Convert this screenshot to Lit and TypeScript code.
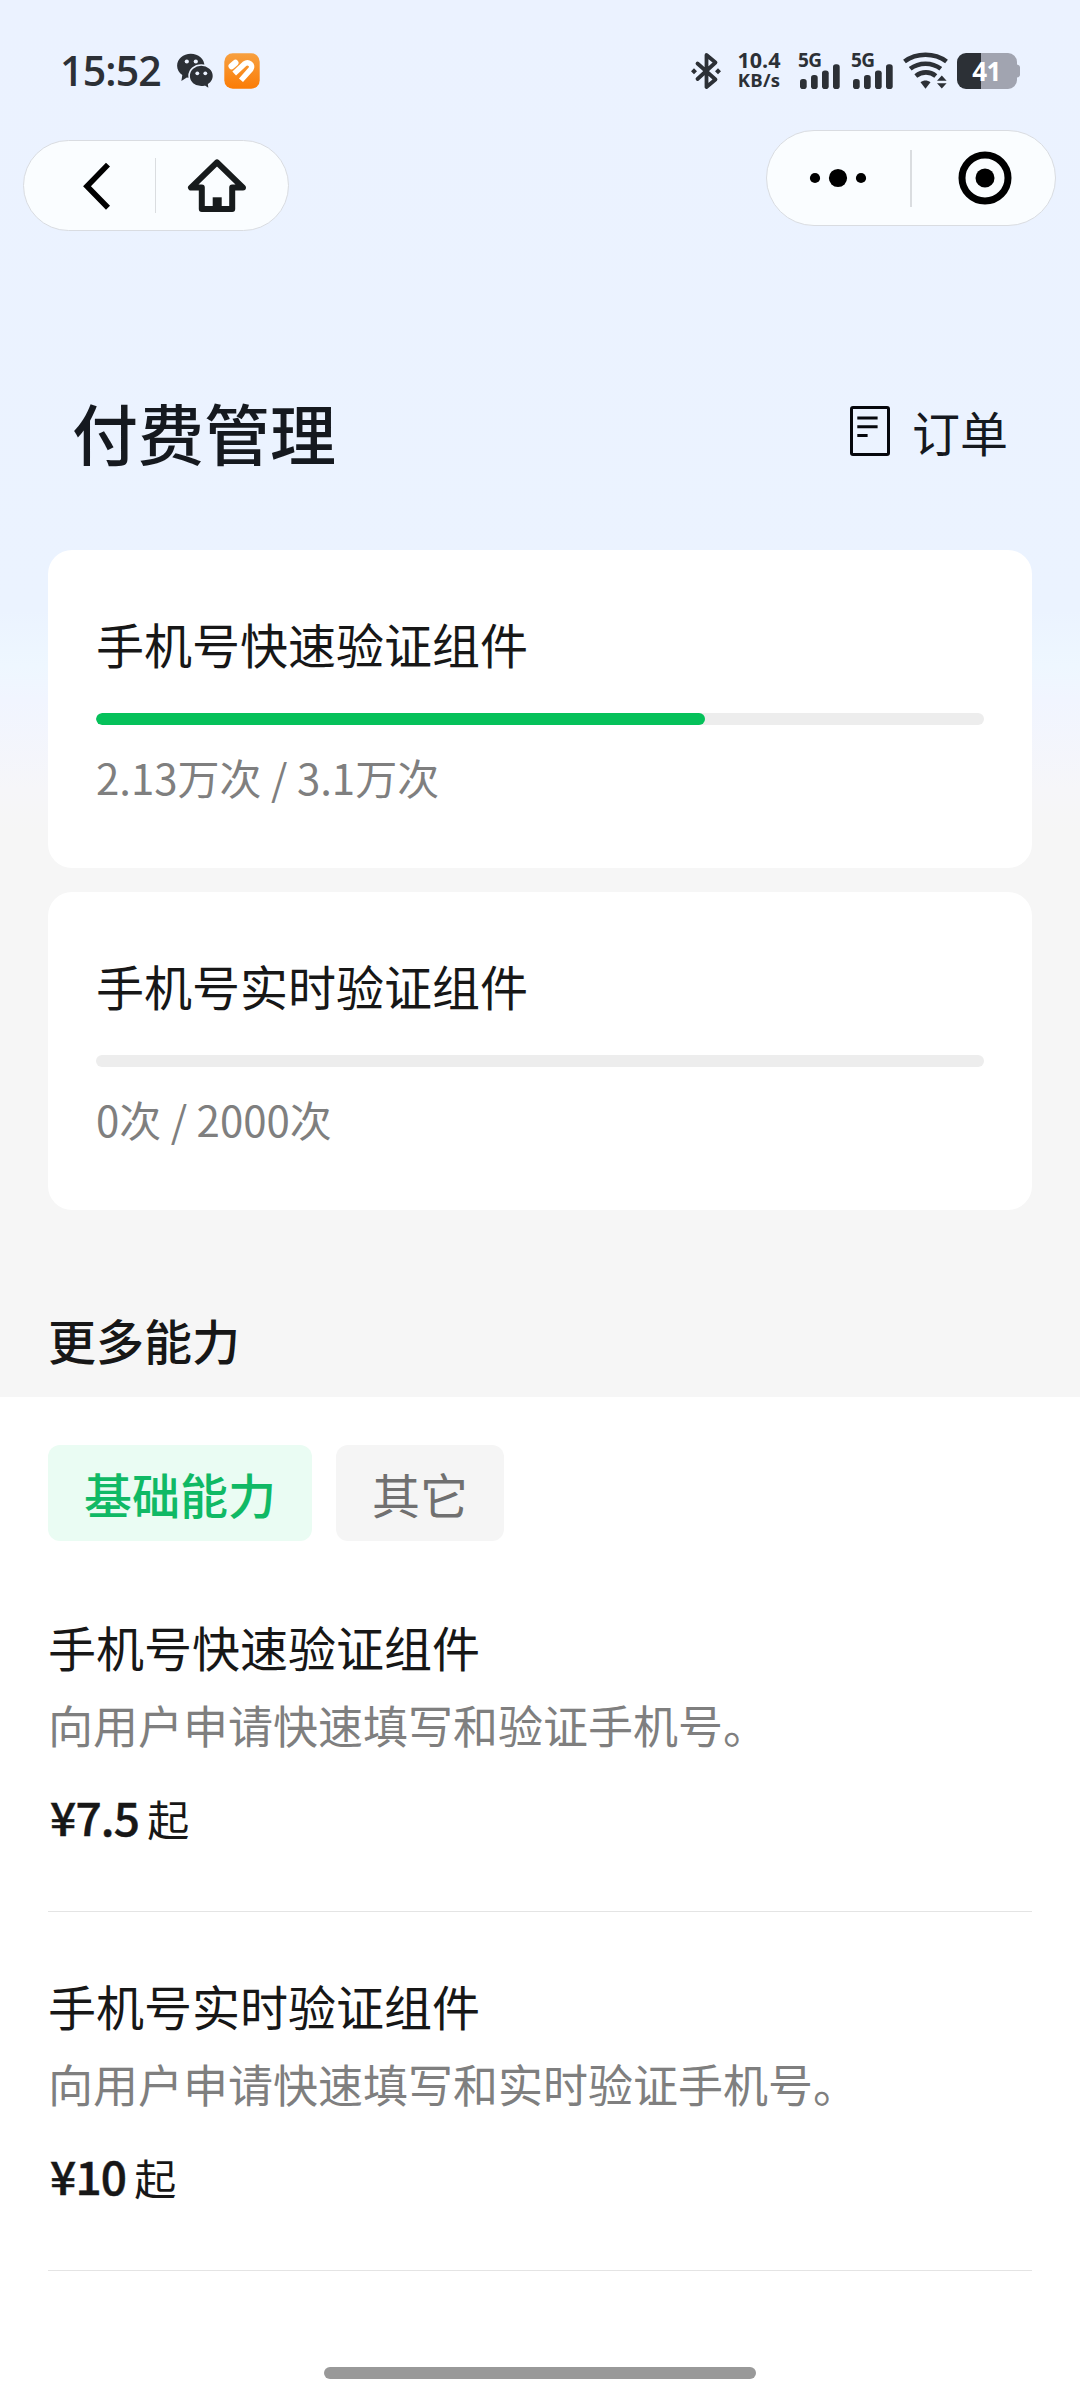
import { LitElement, html, css } from "lit";
import { customElement, property } from "lit/decorators.js";

const bluetoothIcon = html`
  <svg width="32" height="38" viewBox="689 52 32 38" fill="none" stroke="#2c3036" stroke-width="3.8" stroke-linejoin="round" stroke-linecap="round">
    <path d="M696.5 63.5 L714.5 79.5 L705.5 87 V55 L714.5 62.5 L696.5 79"></path>
    <path d="M690 71.2l3-3 3 3-3 3zM714 71.2l3-3 3 3-3 3z" fill="#2c3036" stroke="none"></path>
  </svg>`;

const wechatIcon = html`
  <svg width="36" height="36" viewBox="176.5 52.5 36 36">
    <path fill="#2c3036" d="M190.3 53.2c-7.6 0-13.7 5.3-13.7 12 0 3.8 2 7.2 5.2 9.4l-.9 5.9 5.4-3.4c1.2.3 2.6.5 4 .5 7.6 0 13.7-5.5 13.7-12.3s-6.1-12.1-13.7-12.1z"></path>
    <path fill="#2c3036" stroke="#ebf2ff" stroke-width="1.6" d="M200.7 64.5c-6.7 0-12.1 4.9-12.1 11s5.4 10.9 12.1 10.9c1.3 0 2.5-.2 3.6-.5l4.6 3-.7-5c3-2 4.8-5 4.8-8.4 0-6.1-5.6-11-12.3-11z"></path>
    <g fill="#ebf2ff">
      <circle cx="186.3" cy="61" r="2.1"></circle><circle cx="195.3" cy="61" r="2.1"></circle>
      <circle cx="196.8" cy="72.8" r="1.9"></circle><circle cx="204.8" cy="72.8" r="1.9"></circle>
    </g>
  </svg>`;

const heartIcon = html`
  <svg width="36" height="36" viewBox="0 0 36 36">
    <defs>
      <linearGradient id="warm" x1="0" y1="0" x2="0" y2="1">
        <stop offset="0" stop-color="#f7a040"></stop><stop offset="1" stop-color="#fb7c06"></stop>
      </linearGradient>
    </defs>
    <rect x=".3" y=".3" width="35.4" height="35.4" rx="8.5" fill="url(#warm)"></rect>
    <g fill="none" stroke="#fff" stroke-linejoin="round">
      <path d="M7.6 13.2L11.4 9.9" stroke-width="6.2" stroke-linecap="round"></path>
      <path d="M10.2 20.4L20.4 10.9c4-3.2 9.4 1.2 6.5 5.2L17 27.2" stroke-width="5.4"></path>
    </g>
  </svg>`;

const signalBars = html`
  <svg width="42" height="38" viewBox="798 52 42 38" fill="#2c3036">
    <rect x="800" y="79" width="6.7" height="10" rx="2.8"></rect>
    <rect x="811" y="75" width="6.7" height="14" rx="2.8"></rect>
    <rect x="822" y="70.5" width="6.7" height="18.5" rx="2.8"></rect>
    <rect x="833" y="64.3" width="6.7" height="24.7" rx="2.8"></rect>
  </svg>`;

const wifiIcon = html`
  <svg width="46" height="38" viewBox="903 52 46 38" fill="none" stroke="#2c3036" stroke-width="4.6">
    <path d="M904.5 61.5C916.5 52.5 934.5 52.5 946.5 61.5"></path>
    <path d="M910.2 68.8C919 62 932 62 940.8 68.8"></path>
    <path d="M915.8 76C922 71.2 930 71.2 935.8 76"></path>
    <path d="M920.5 82.3c3.2-2.3 6.8-2.3 10 0l-5 6.5z" fill="#2c3036" stroke="none"></path>
    <path d="M937 80.8l4.8-5.3 4.8 5.3zM937 83.3l4.8 5.3 4.8-5.3z" fill="#2c3036" stroke="none"></path>
  </svg>`;

const batteryShape = html`
  <svg width="63" height="36" viewBox="0 0 63 36">
    <path d="M24 0H51a9 9 0 0 1 9 9v2.5q3 .5 3 3v7q0 2.5-3 3V27a9 9 0 0 1-9 9H24z" fill="#a1a4b0"></path>
    <path d="M24 0H9a9 9 0 0 0-9 9v18a9 9 0 0 0 9 9h15z" fill="#2c3036"></path>
  </svg>`;

const backIcon = html`
  <svg width="30" height="50" viewBox="82 160 30 50" fill="none" stroke="#000" stroke-width="5.6">
    <path d="M108 163.6L87 185.2L108 206.8"></path>
  </svg>`;

const homeIcon = html`
  <svg width="60" height="56" viewBox="187 158 60 56" fill="none" stroke="#171b1c" stroke-width="6" stroke-linejoin="round">
    <path d="M217 162.3L191 187.6H201.8V209H232.2V187.6H243L217 162.3Z"></path>
    <rect x="212.7" y="197.3" width="9" height="12" fill="#171b1c" stroke="none"></rect>
  </svg>`;

const moreIcon = html`
  <svg width="58" height="20" viewBox="809 168 58 20">
    <circle cx="815" cy="178" r="5.1"></circle><circle cx="838" cy="178" r="9.1"></circle><circle cx="861" cy="178" r="5.1"></circle>
  </svg>`;

const closeIcon = html`
  <svg width="54" height="54" viewBox="-27 -27 54 54">
    <circle r="23" fill="none" stroke="#000" stroke-width="7"></circle><circle r="9.5"></circle>
  </svg>`;

const orderIcon = html`
  <svg width="40" height="50" viewBox="0 0 40 50" fill="none" stroke="#05070c" stroke-width="3">
    <rect x="1.5" y="1.5" width="37" height="47" rx="1.5"></rect>
    <path d="M7.3 12H27.6M7.3 20.7H27.6M7.3 29.5H17.6"></path>
  </svg>`;

@customElement("status-bar")
class StatusBar extends LitElement {
  static styles = css`
    :host { display: flex; justify-content: space-between; height: 130px; padding: 52px 60px 0 60px; box-sizing: border-box; color: #2c3036; font-family: "Open Sans", "Noto Sans", sans-serif; }
    svg { display: block; flex: none; }
    .side { display: flex; align-items: flex-start; height: 38px; }
    .clock { width: 105px; font-size: 41px; line-height: 38px; font-weight: 600; white-space: nowrap; }
    .clock-text { display: block; margin-top: -1px; letter-spacing: -0.8px; }
    .wechat { margin: 1px 0 0 12px; }
    .heart { margin: 1px 0 0 11px; }
    .speed { display: flex; flex-direction: column; align-items: center; width: 46px; margin-left: 14px; font-weight: 700; white-space: nowrap; }
    .rate { font-size: 21.5px; line-height: 16px; }
    .unit { font-size: 18.5px; line-height: 24px; letter-spacing: 0.2px; }
    .signal { display: grid; width: 42px; margin-left: 16px; }
    .signal + .signal { margin-left: 11px; }
    .signal > * { grid-area: 1 / 1; }
    .generation { font-size: 19px; line-height: 17px; font-weight: 700; letter-spacing: -0.5px; }
    .wifi { margin-left: 10px; }
    .battery { display: grid; width: 63px; height: 36px; margin: 1px 0 0 8px; }
    .battery > * { grid-area: 1 / 1; }
    .level { width: 59px; text-align: center; color: #fff; font-size: 26px; line-height: 36px; font-weight: 700; letter-spacing: -0.5px; }
  `;

  render() {
    const signal = html`<div class="signal">${signalBars}<span class="generation">5G</span></div>`;
    return html`
      <div class="side">
        <div class="clock"><span class="clock-text">15:52</span></div>
        <div class="wechat">${wechatIcon}</div>
        <div class="heart">${heartIcon}</div>
      </div>
      <div class="side">
        ${bluetoothIcon}
        <div class="speed"><span class="rate">10.4</span><span class="unit">KB/s</span></div>
        ${signal}${signal}
        <div class="wifi">${wifiIcon}</div>
        <div class="battery">${batteryShape}<span class="level">41</span></div>
      </div>`;
  }
}

@customElement("nav-capsules")
class NavCapsules extends LitElement {
  static styles = css`
    :host { display: flex; justify-content: space-between; align-items: flex-start; height: 264px; padding: 0 24px 0 23px; box-sizing: border-box; }
    svg { display: block; }
    .capsule { display: flex; align-items: center; box-sizing: border-box; background: #fafdff; border: 1px solid #d9dce1; }
    .back { width: 266px; height: 91px; margin-top: 10px; border-radius: 46px; padding-left: 58px; }
    .menu { width: 290px; height: 96px; border-radius: 48px; padding-left: 42px; }
    .line { width: 1px; height: 55px; background: #dadde0; margin: 0 31px 0 43px; }
    .menu .line { width: 2px; height: 57px; margin: 0 46px 0 43px; }
  `;

  render() {
    return html`
      <div class="capsule back">${backIcon}<span class="line"></span>${homeIcon}</div>
      <div class="capsule menu">${moreIcon}<span class="line"></span>${closeIcon}</div>`;
  }
}

@customElement("usage-card")
class UsageCard extends LitElement {
  @property() name = "";
  @property() usage = "";
  @property({ type: Number }) percent = 0;

  static styles = css`
    :host { display: block; height: 318px; box-sizing: border-box; padding: 60px 48px 0; background: #fff; border-radius: 24px; }
    .name { font-size: 48px; line-height: 66px; color: #171717; }
    .track { height: 12px; margin-top: 37px; border-radius: 6px; background: #ededed; overflow: hidden; }
    .fill { height: 12px; border-radius: 6px; background: #05c15a; }
    .usage { margin-top: 22px; font-size: 42px; line-height: 60px; color: #7f7f7f; }
  `;

  render() {
    return html`
      <div class="name">${this.name}</div>
      <div class="track"><div class="fill" style="width:${this.percent}%"></div></div>
      <div class="usage">${this.usage}</div>`;
  }
}

@customElement("ability-item")
class AbilityItem extends LitElement {
  @property() name = "";
  @property() desc = "";
  @property() price = "";

  static styles = css`
    :host { display: block; height: 359px; box-sizing: border-box; padding-top: 60px; border-bottom: 1px solid #e4e4e4; }
    .name { font-size: 48px; line-height: 66px; color: #171717; }
    .desc { margin-top: 16px; font-size: 45px; line-height: 60px; color: #7f7f7f; }
    .price { display: flex; align-items: baseline; gap: 8px; margin-top: 31px; padding-left: 2px; line-height: 60px; color: #171717; }
    .amount { font-size: 46px; font-weight: 500; letter-spacing: -0.8px; -webkit-text-stroke: 0.5px #171717; }
    .from { font-size: 42px; }
  `;

  render() {
    return html`
      <div class="name">${this.name}</div>
      <div class="desc">${this.desc}</div>
      <div class="price"><span class="amount">${this.price}</span><span class="from">起</span></div>`;
  }
}

@customElement("app-root")
class AppRoot extends LitElement {
  static styles = css`
    :host { display: block; font-family: "Noto Sans CJK SC", sans-serif; }
    .page { display: flex; flex-direction: column; width: 1080px; height: 2400px; overflow: hidden; background: #fff; }
    .upper { height: 1397px; box-sizing: border-box; background: linear-gradient(180deg, #ebf2ff 0, #ebf3ff 610px, #eef7ff 665px, #f1f5ff 700px, #f6f6f9 790px, #f6f6f6 830px); }
    .heading { display: flex; justify-content: space-between; align-items: flex-start; height: 156px; padding: 0 72px; box-sizing: border-box; }
    .title { font-size: 66px; line-height: 74px; font-weight: 500; color: #15191f; }
    .orders { display: flex; align-items: flex-start; gap: 22px; padding-top: 12px; font-size: 48px; line-height: 51px; color: #15191f; }
    .cards { display: flex; flex-direction: column; gap: 24px; padding: 0 48px; }
    .section { padding: 93px 48px 0; font-size: 48px; line-height: 72px; font-weight: 500; color: #171717; }
    .lower { display: flex; flex-direction: column; flex: 1; padding: 48px 48px 0; }
    .tabs { display: flex; gap: 24px; height: 96px; margin-bottom: 12px; }
    .tab { padding: 0 36px; border-radius: 12px; font-size: 48px; line-height: 96px; color: #707070; background: #f5f5f5; }
    .tab-active { font-weight: 500; color: #10b965; background: #eafcf3; }
    .indicator { align-self: center; width: 432px; height: 12px; margin: auto 0 21px; border-radius: 6px; background: #999; }
  `;

  render() {
    return html`
      <div class="page">
        <div class="upper">
          <status-bar></status-bar>
          <nav-capsules></nav-capsules>
          <div class="heading">
            <div class="title">付费管理</div>
            <div class="orders">${orderIcon}<span>订单</span></div>
          </div>
          <div class="cards">
            <usage-card name="手机号快速验证组件" usage="2.13万次 / 3.1万次" percent="68.6"></usage-card>
            <usage-card name="手机号实时验证组件" usage="0次 / 2000次" percent="0"></usage-card>
          </div>
          <div class="section">更多能力</div>
        </div>
        <div class="lower">
          <div class="tabs">
            <div class="tab tab-active">基础能力</div>
            <div class="tab">其它</div>
          </div>
          <ability-item name="手机号快速验证组件" desc="向用户申请快速填写和验证手机号。" price="¥7.5"></ability-item>
          <ability-item name="手机号实时验证组件" desc="向用户申请快速填写和实时验证手机号。" price="¥10"></ability-item>
          <div class="indicator"></div>
        </div>
      </div>`;
  }
}
